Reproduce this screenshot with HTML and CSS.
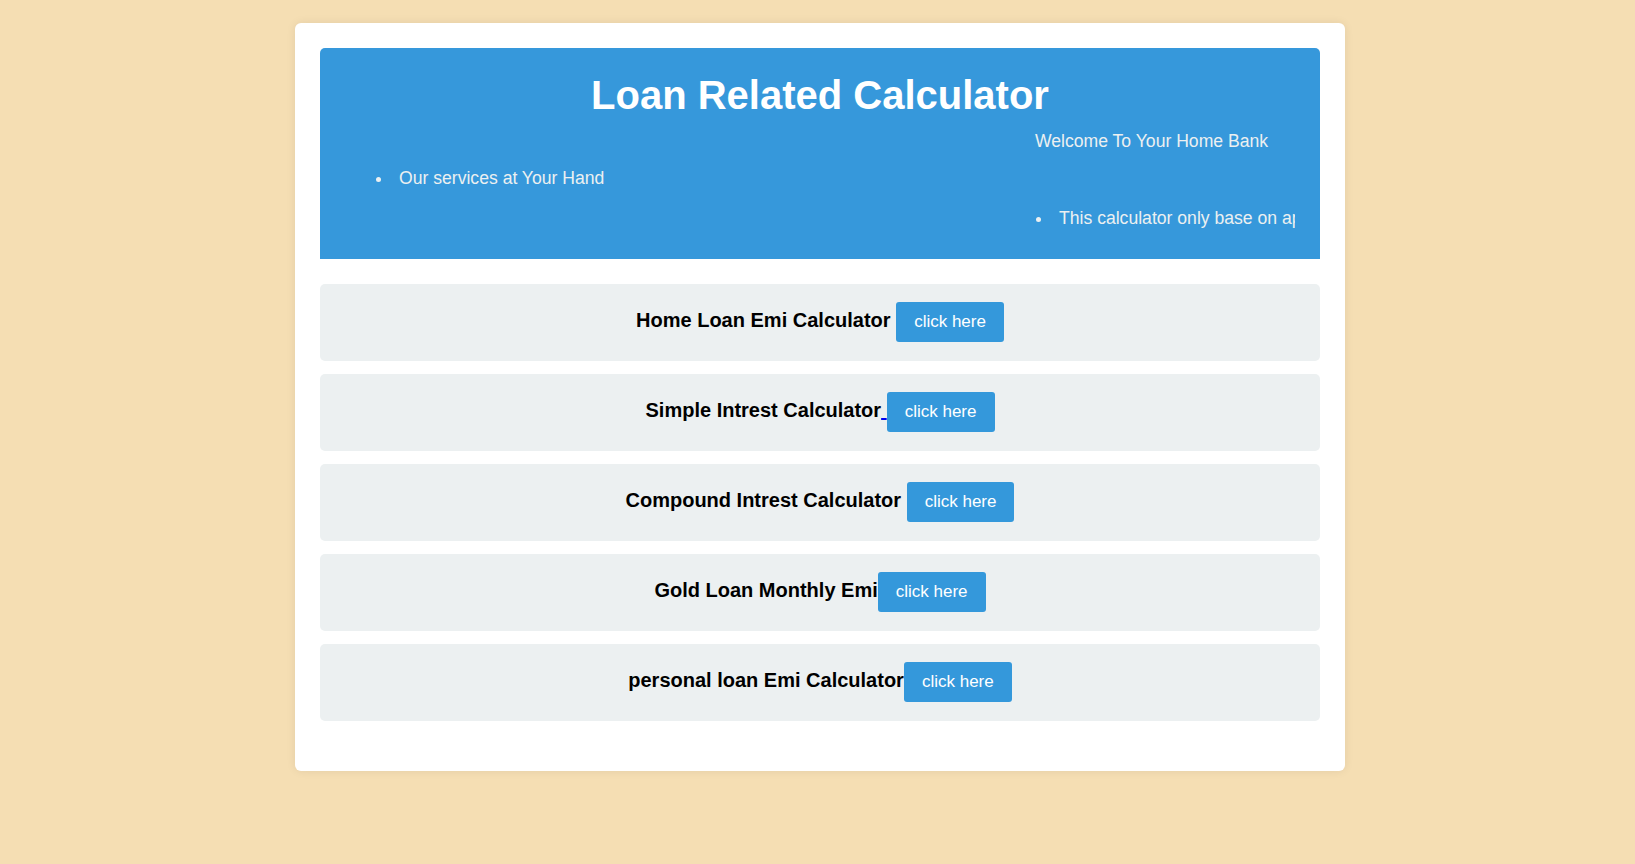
FILE: index.html
```html
<!DOCTYPE html>
<html lang="en">
<head>
<meta charset="utf-8">
<title>Loan Related Calculator</title>
<link rel="stylesheet" href="styles.css">
</head>
<body>
<div class="card">
  <header class="banner">
    <h1 class="title">Loan Related Calculator</h1>
    <div class="ticker"><div class="ticker-inner ticker-a">Welcome To Your Home Bank</div></div>
    <ul class="services"><li>Our services at Your Hand</li></ul>
    <div class="ticker"><div class="ticker-inner ticker-b"><ul class="note"><li>This calculator only base on approximate values</li></ul></div></div>
  </header>
  <div class="rows">
    <div class="row"><span class="label">Home Loan Emi Calculator</span> <a class="btn" href="#">click here</a></div>
    <div class="row"><span class="label">Simple Intrest Calculator</span><a class="link" href="#"> </a><a class="btn" href="#">click here</a></div>
    <div class="row"><span class="label">Compound Intrest Calculator</span> <a class="btn" href="#">click here</a></div>
    <div class="row"><span class="label">Gold Loan Monthly Emi</span><a class="btn" href="#">click here</a></div>
    <div class="row"><span class="label">personal loan Emi Calculator</span><a class="btn" href="#">click here</a></div>
  </div>
</div>
</body>
</html>
```
FILE: styles.css
```css
html, body {
  margin: 0;
  padding: 0;
}
body {
  background: #f5deb3;
  font-family: "Liberation Sans", Arial, sans-serif;
  padding: 23px 0 40px 5px;
}
.card {
  width: 1000px;
  margin: 0 auto;
  background: #ffffff;
  border-radius: 6px;
  padding: 25px 25px 50px;
  box-shadow: 0 0 10px rgba(0, 0, 0, 0.08);
}
.banner {
  background: #3698db;
  border-radius: 5px 5px 0 0;
  color: #ecf0f1;
  padding: 0 25px 31px;
  font-size: 17.6px;
}
.title {
  margin: 0;
  padding-top: 24px;
  font-size: 40px;
  line-height: 46px;
  font-weight: bold;
  color: #ffffff;
  text-align: center;
}
.ticker {
  overflow: hidden;
  white-space: nowrap;
  line-height: 20px;
}
.ticker-a {
  margin-top: 13px;
  padding-left: 690px;
}
.ticker-b {
  padding-left: 674px;
}
.services,
.note {
  list-style: none;
  line-height: 20px;
}
.services li,
.note li {
  height: 20px;
}
.services li::before,
.note li::before {
  content: "";
  display: inline-block;
  width: 5px;
  height: 5px;
  border-radius: 50%;
  background: currentColor;
  margin-left: -23px;
  margin-right: 18px;
  vertical-align: middle;
}
.services {
  margin: 17px 0 20px;
  padding-left: 54px;
}
.note {
  margin: 0;
  padding-left: 40px;
}
.rows {
  display: flex;
  flex-direction: column;
  gap: 13px;
  margin-top: 25px;
}
.row {
  background: #ecf0f1;
  border-radius: 5px;
  text-align: center;
  padding: 16px 0 19px;
  line-height: 40px;
  font-size: 20px;
  font-weight: bold;
  color: #000000;
}
.label {
  font-weight: bold;
}
.link {
  color: #0000ee;
  text-decoration: underline;
}
.btn {
  display: inline-block;
  vertical-align: baseline;
  background: #3498db;
  color: #ffffff;
  text-decoration: none;
  font-size: 17px;
  font-weight: normal;
  line-height: 20px;
  padding: 10px 18px;
  border-radius: 3px;
}
```
